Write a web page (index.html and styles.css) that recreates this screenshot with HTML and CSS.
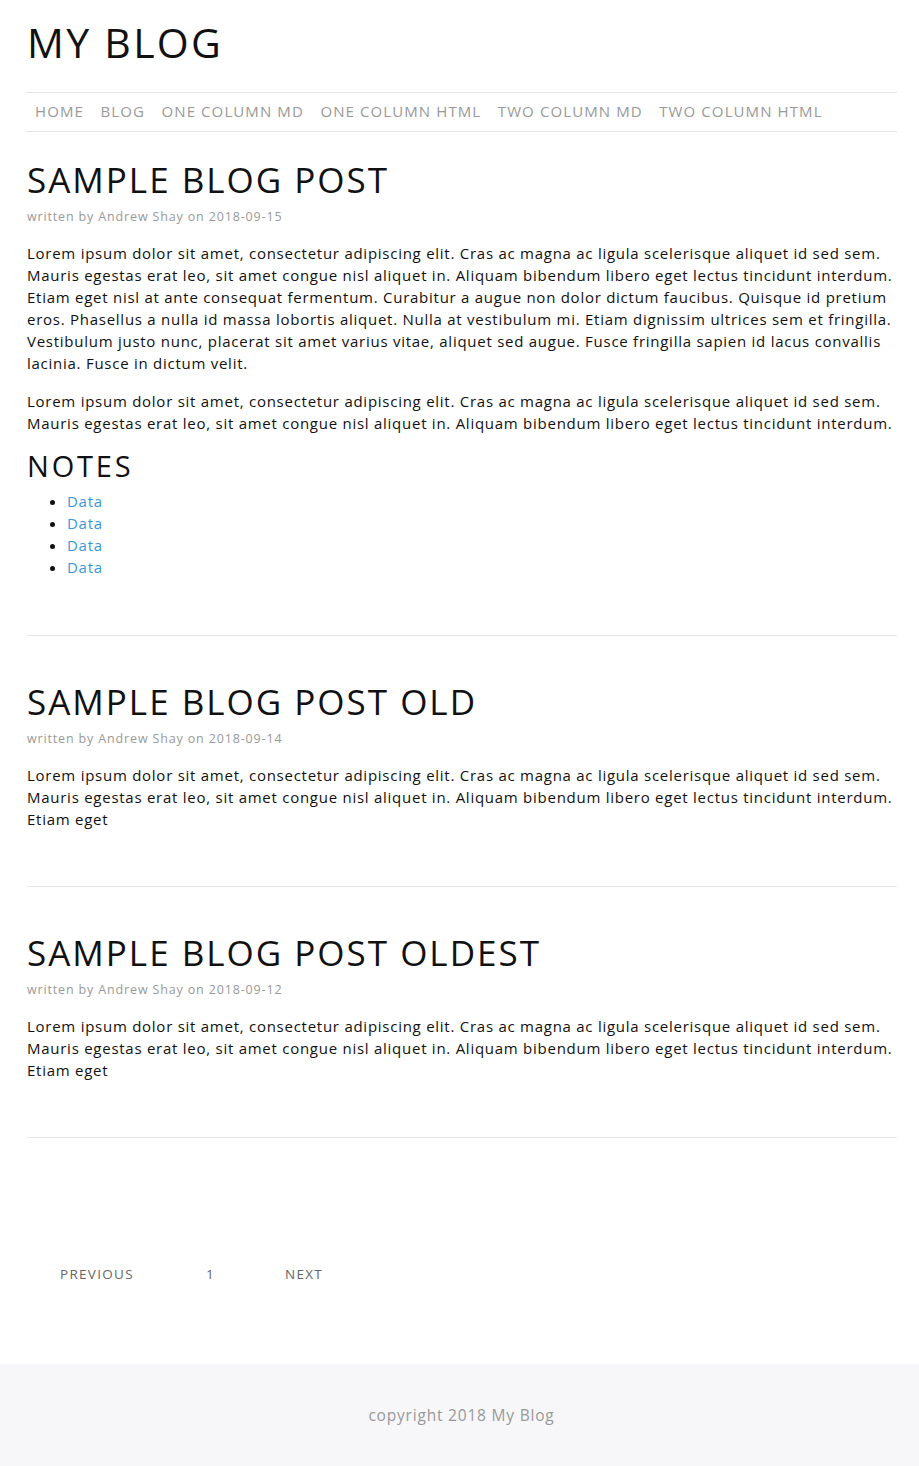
FILE: index.html
```html
<!DOCTYPE html>
<html>
<head>
<meta charset="utf-8">
<title>My Blog</title>
<link rel="stylesheet" href="styles.css">
</head>
<body>
<div class="page">
  <header class="site-header">
    <h1 class="site-title">MY BLOG</h1>
    <nav class="site-nav">
      <a href="#">HOME</a>
      <a href="#">BLOG</a>
      <a href="#">ONE COLUMN MD</a>
      <a href="#">ONE COLUMN HTML</a>
      <a href="#">TWO COLUMN MD</a>
      <a href="#">TWO COLUMN HTML</a>
    </nav>
  </header>

  <main class="posts">
    <article class="post">
      <h2 class="post-title">SAMPLE BLOG POST</h2>
      <p class="post-meta">written by Andrew Shay on 2018-09-15</p>
      <p class="post-text">Lorem ipsum dolor sit amet, consectetur adipiscing elit. Cras ac magna ac ligula scelerisque aliquet id sed sem. Mauris egestas erat leo, sit amet congue nisl aliquet in. Aliquam bibendum libero eget lectus tincidunt interdum. Etiam eget nisl at ante consequat fermentum. Curabitur a augue non dolor dictum faucibus. Quisque id pretium eros. Phasellus a nulla id massa lobortis aliquet. Nulla at vestibulum mi. Etiam dignissim ultrices sem et fringilla. Vestibulum justo nunc, placerat sit amet varius vitae, aliquet sed augue. Fusce fringilla sapien id lacus convallis lacinia. Fusce in dictum velit.</p>
      <p class="post-text">Lorem ipsum dolor sit amet, consectetur adipiscing elit. Cras ac magna ac ligula scelerisque aliquet id sed sem. Mauris egestas erat leo, sit amet congue nisl aliquet in. Aliquam bibendum libero eget lectus tincidunt interdum.</p>
      <h3 class="post-subtitle">NOTES</h3>
      <ul class="notes">
        <li><a href="#">Data</a></li>
        <li><a href="#">Data</a></li>
        <li><a href="#">Data</a></li>
        <li><a href="#">Data</a></li>
      </ul>
    </article>

    <article class="post">
      <h2 class="post-title">SAMPLE BLOG POST OLD</h2>
      <p class="post-meta">written by Andrew Shay on 2018-09-14</p>
      <p class="post-text">Lorem ipsum dolor sit amet, consectetur adipiscing elit. Cras ac magna ac ligula scelerisque aliquet id sed sem. Mauris egestas erat leo, sit amet congue nisl aliquet in. Aliquam bibendum libero eget lectus tincidunt interdum. Etiam eget</p>
    </article>

    <article class="post">
      <h2 class="post-title">SAMPLE BLOG POST OLDEST</h2>
      <p class="post-meta">written by Andrew Shay on 2018-09-12</p>
      <p class="post-text">Lorem ipsum dolor sit amet, consectetur adipiscing elit. Cras ac magna ac ligula scelerisque aliquet id sed sem. Mauris egestas erat leo, sit amet congue nisl aliquet in. Aliquam bibendum libero eget lectus tincidunt interdum. Etiam eget</p>
    </article>
  </main>

  <nav class="pagination">
    <a href="#" class="page-link page-prev">PREVIOUS</a>
    <a href="#" class="page-link page-num">1</a>
    <a href="#" class="page-link">NEXT</a>
  </nav>
</div>
<footer class="site-footer">copyright 2018 My Blog</footer>
</body>
</html>
```

FILE: styles.css
```css
html, body {
  margin: 0;
  padding: 0;
}
body {
  font-family: "Open Sans", "Noto Sans", sans-serif;
  color: #111;
  background: #fff;
}
.page {
  padding: 0 22px 0 27px;
}
.site-header {
  padding-top: 18px;
}
.site-title {
  margin: 0;
  font-size: 41px;
  font-weight: 400;
  letter-spacing: 2.3px;
  line-height: 48px;
  color: #111;
}
.site-nav {
  margin-top: 26px;
  border-top: 1px solid #e3e3e3;
  border-bottom: 1px solid #e3e3e3;
  display: flex;
  gap: 16.5px;
  padding: 0 8px 2px;
  height: 36px;
  align-items: center;
}
.site-nav a {
  color: #999;
  text-decoration: none;
  font-size: 15px;
  letter-spacing: 1.1px;
}
.posts {
  padding-top: 26px;
}
.post {
  border-bottom: 1px solid #e6e6e6;
  padding-bottom: 56px;
  margin-bottom: 44px;
}
.post-title {
  margin: 0;
  font-size: 35px;
  font-weight: 400;
  letter-spacing: 2px;
  line-height: 44px;
}
.post-meta {
  margin: 6px 0 0;
  font-size: 12.5px;
  line-height: 18px;
  color: #999;
  letter-spacing: 0.85px;
}
.post-text {
  margin: 16px 0 0;
  font-size: 15px;
  line-height: 22px;
  letter-spacing: 0.74px;
}
.post-subtitle {
  margin: 15px 0 0;
  font-size: 29px;
  font-weight: 400;
  letter-spacing: 2.8px;
  line-height: 34px;
}
.notes {
  margin: 7px 0 0;
  padding-left: 40px;
  font-size: 15px;
  line-height: 22px;
  letter-spacing: 0.74px;
}
.notes li::marker {
  color: #111;
}
.notes a {
  color: #3a97dd;
  text-decoration: none;
}
.notes li:last-child {
  margin-bottom: 1px;
}
.pagination {
  display: flex;
  padding: 82px 0 80px 33px;
}
.page-link {
  color: #666;
  text-decoration: none;
  font-size: 13.5px;
  line-height: 20px;
  letter-spacing: 1.3px;
}
.page-prev { width: 146px; }
.page-num { width: 79px; }
.site-footer {
  background: #f7f7f9;
  color: #999;
  text-align: center;
  font-size: 15.5px;
  line-height: 22px;
  letter-spacing: 0.8px;
  padding: 40px 0 40px 4px;
}
```
